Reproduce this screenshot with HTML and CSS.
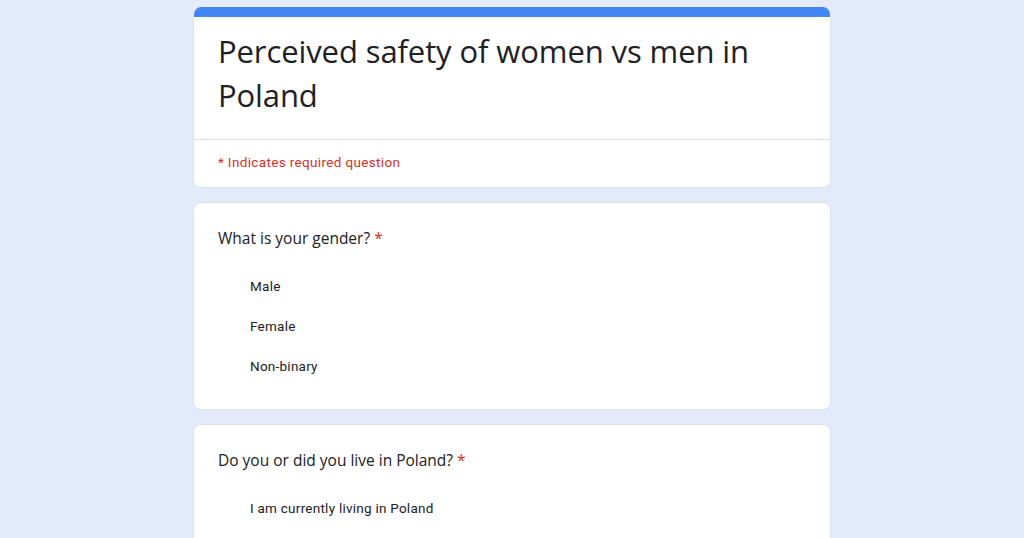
FILE: index.html
```html
<!DOCTYPE html>
<html>
<head>
<meta charset="utf-8">
<link rel="stylesheet" href="styles.css">
</head>
<body>
<div class="form">
  <div class="card header">
    <div class="bar"></div>
    <h1 class="title">Perceived safety of women vs men in Poland</h1>
    <div class="divider"></div>
    <div class="required-note">* Indicates required question</div>
  </div>
  <div class="card question">
    <div class="q-title">What is your gender? <span class="star">*</span></div>
    <div class="options">
      <div class="option">Male</div>
      <div class="option">Female</div>
      <div class="option">Non-binary</div>
    </div>
  </div>
  <div class="card question">
    <div class="q-title">Do you or did you live in Poland? <span class="star">*</span></div>
    <div class="options">
      <div class="option">I am currently living in Poland</div>
    </div>
  </div>
</div>
</body>
</html>
```

FILE: styles.css
```css
html, body {
  margin: 0;
  padding: 0;
  height: 100%;
  overflow: hidden;
}
body {
  background: #e3ebfa;
  font-family: Roboto, "Liberation Sans", Arial, sans-serif;
  color: #202124;
}
.form {
  width: 638px;
  margin: 7px auto 0;
  display: flex;
  flex-direction: column;
  gap: 14px;
}
.card {
  background: #ffffff;
  border-radius: 8px;
  border: 1px solid #dde3ee;
  box-sizing: border-box;
  overflow: hidden;
}
.header {
  border-top: none;
}
.bar {
  height: 10px;
  background: #4285f4;
}
.title {
  margin: 0;
  padding: 12px 24px 22px;
  font-family: "Open Sans", Roboto, sans-serif;
  font-weight: 400;
  font-size: 31px;
  line-height: 44px;
  letter-spacing: -0.1px;
  color: #202124;
}
.divider {
  height: 1px;
  background: #dadce0;
}
.required-note {
  padding: 14px 24px 17px;
  font-size: 13.5px;
  line-height: 16px;
  letter-spacing: 0.35px;
  color: #d93025;
}
.question {
  padding: 23px 24px 0;
}
.q-title {
  font-family: "Open Sans", Roboto, sans-serif;
  font-size: 15.5px;
  line-height: 24px;
  color: #202124;
}
.star {
  color: #d93025;
}
.options {
  display: flex;
  flex-direction: column;
  padding: 26px 0 33px 32px;
  gap: 20px;
}
.option {
  font-size: 13.5px;
  line-height: 20px;
  letter-spacing: 0.25px;
  color: #202124;
}
```
